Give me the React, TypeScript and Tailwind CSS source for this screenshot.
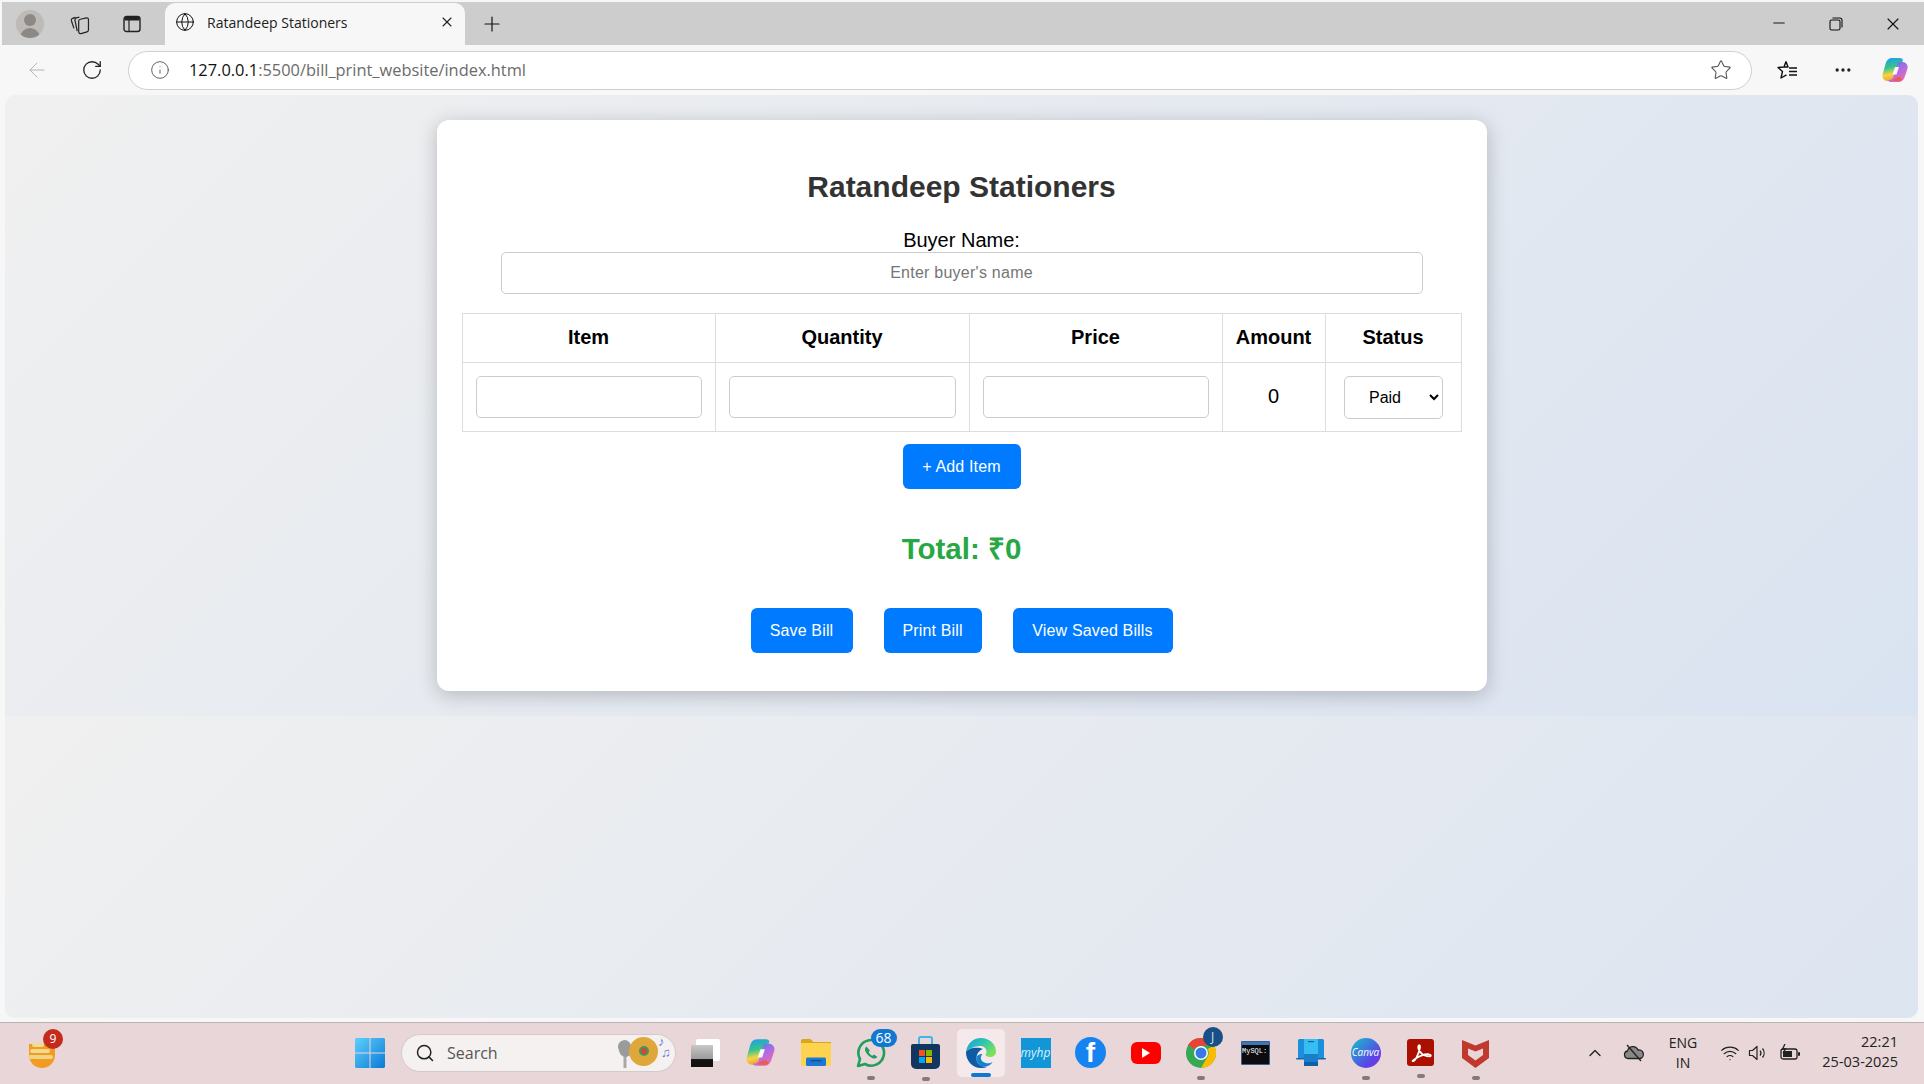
import { ArrowLeft, ChevronUp, Globe, Info, Minus, MoreHorizontal, Plus, RotateCw, Search, Star, Wifi, X } from "lucide-react";

const ARIAL = "font-['Liberation_Sans',Arial,sans-serif]";
const UI = "font-['Open_Sans','Noto_Sans',sans-serif]";

function Collections() {
  return (
    <svg width="22" height="22" viewBox="0 0 20 20" fill="none" stroke="#222" strokeWidth="1.1" strokeLinejoin="round">
      <path d="M4.500 14 2.200 7c-.3-1 .1-1.800 1-2.100L6 4" />
      <path d="M7.500 16.500 5.400 6.500c-.2-1 .3-1.800 1.200-2l2.800-.7" />
      <path d="M8.800 7.500c0-1 .6-1.600 1.500-1.800l5.500-1.200c1-.2 1.900.5 1.900 1.500v9.500c0 .9-.5 1.500-1.300 1.700l-5.500 1.500c-1.100.3-2.100-.5-2.100-1.600z" />
    </svg>
  );
}

function TabsIcon() {
  return (
    <svg width="18" height="18" viewBox="0 0 18 18" fill="none">
      <rect x="1" y="1.500" width="16" height="15" rx="2.500" stroke="#222" strokeWidth="1.400" />
      <path d="M1.500 4c0-1.500 1-2.200 2-2.200h11c1 0 2 .7 2 2.200v1.600h-15z" fill="#222" />
      <path d="M6 5v11" stroke="#222" strokeWidth="1.200" />
    </svg>
  );
}

function RestoreIcon() {
  return (
    <svg width="14" height="14" viewBox="0 0 14 14" fill="none" stroke="#111" strokeWidth="1.100">
      <rect x="1" y="3" width="10" height="10" rx="1.600" />
      <path d="M3.500 1h7.200C12 1 13 2 13 3.300v7.200" />
    </svg>
  );
}

function FavoritesIcon() {
  return (
    <svg width="24" height="24" viewBox="0 0 24 24" fill="none" stroke="#111" strokeWidth="1.400" strokeLinejoin="round">
      <path d="M10 3.500 12 9H8M10 3.500 8 9 2 9.500l4.500 4-1.500 6.500 5.500-3.200" />
      <path d="M13 10h8M13 13.500h8M13 17h8" />
    </svg>
  );
}

function CopilotLogo({ size = 28 }: { size?: number }) {
  return (
    <svg width={size} height={size} viewBox="0 0 28 28">
      <defs>
        <linearGradient id="cpA" x1="0.3" y1="0" x2="0.5" y2="1">
          <stop offset="0" stopColor="#1f9fe8" />
          <stop offset="0.4" stopColor="#35c48d" />
          <stop offset="0.7" stopColor="#f4d53f" />
          <stop offset="1" stopColor="#f29a3c" />
        </linearGradient>
        <linearGradient id="cpB" x1="0.2" y1="0" x2="0.8" y2="1">
          <stop offset="0" stopColor="#4a7df0" />
          <stop offset="0.5" stopColor="#b46be0" />
          <stop offset="1" stopColor="#ef6fa8" />
        </linearGradient>
      </defs>
      <path d="M11 2h8c1.500 0 2.500.7 3 2l-6 17c-.8 2.300-2.300 4-5 4H6.500C3 25 .8 22 1.600 18.500L4.500 8C5.500 4.500 7.500 2 11 2z" fill="url(#cpA)" />
      <path d="M17 6h4.500C25 6 27.300 9 26.500 12.500L24 20c-1.100 3.500-3 6-6.500 6H10c-1.500 0-2.500-.7-3-1.800l1.500-.2c2 0 3.200-1.300 3.900-3.200z" fill="url(#cpB)" />
      <path d="M14 11h4l-2.500 7.500h-4z" fill="#fff" opacity="0.95" />
      <path d="M11 25h7c2 0 3-.6 3.500-1.500L19 21l-4 .5z" fill="#f0574a" opacity="0.9" />
    </svg>
  );
}

function WindowsLogo() {
  return (
    <svg width="30" height="30" viewBox="0 0 30 30">
      <defs>
        <linearGradient id="winA" x1="0" y1="0" x2="1" y2="1">
          <stop offset="0" stopColor="#5fd0fb" />
          <stop offset="1" stopColor="#0a7ad6" />
        </linearGradient>
      </defs>
      <path d="M0 1.500C0 .7.700 0 1.500 0h13v14.500H0zM15.500 0h13c.8 0 1.500.7 1.500 1.500v13H15.500zM0 15.500h14.500V30h-13C.7 30 0 29.300 0 28.500zM15.500 15.500H30v13c0 .8-.7 1.500-1.500 1.500h-13z" fill="url(#winA)" />
    </svg>
  );
}

function EdgeLogo() {
  return (
    <svg width="32" height="32" viewBox="0 0 32 32">
      <defs>
        <linearGradient id="edA" x1="0" y1="0" x2="1" y2="0.6">
          <stop offset="0" stopColor="#1b9de2" />
          <stop offset="0.55" stopColor="#30c6ae" />
          <stop offset="1" stopColor="#7fe05a" />
        </linearGradient>
      </defs>
      <path d="M1 15C2 7 8 1 16 1c9 0 15 6.500 15 13.500 0 3.500-2.500 5.500-6 5.500-2.500 0-4.500-1-4.500-2.200 0-.8 1-1.100 1-3C21.500 11.500 19 9 15.500 9 9 9 4.500 12 1 15z" fill="url(#edA)" />
      <path d="M1 15c-.3 8.500 6.500 16 15 16 2.500 0 4.500-.5 6.500-1.500-5 1-11-1.500-11-8 0-5 3-8.500 6.500-9.500C13 9.500 4 10.500 1 15z" fill="#0f5aa5" />
      <path d="M11.500 21.500c0 7 7 10 12.500 7 1.500-.8 2.700-2 3.500-3.500-4 2.500-10.500 1-11.500-3-.5-2 .3-4 1.500-5-3.500 0-6 1.700-6 4.500z" fill="#1383cf" />
    </svg>
  );
}

function ChromeLogo() {
  return (
    <svg width="30" height="30" viewBox="0 0 30 30">
      <circle cx="15" cy="15" r="15" fill="#34a853" />
      <path d="M15 0a15 15 0 0 1 13 7.500H15a7.500 7.500 0 0 0-6.500 3.750L2 7A15 15 0 0 1 15 0z" fill="#ea4335" />
      <path d="M28 7.500A15 15 0 0 1 15 30l6.500-11.250A7.500 7.500 0 0 0 21.500 11z" fill="#fbbc04" />
      <circle cx="15" cy="15" r="7" fill="#fff" />
      <circle cx="15" cy="15" r="5.500" fill="#3b78e7" />
    </svg>
  );
}

function WhatsAppLogo() {
  return (
    <svg width="30" height="30" viewBox="0 0 30 30" fill="none">
      <path d="M2 28l2-7A12.800 12.800 0 1 1 9 26z" stroke="#1f9e5c" strokeWidth="2.600" strokeLinejoin="round" />
      <path d="M10.500 8.500c-1.500 1-2 2.800-1 5 1.500 3.200 4 5.500 7 6.700 2.200.8 4 .2 4.800-1.500l-3.300-2.200-1.500 1.300c-1.800-.8-3-2.200-3.800-3.900l1.200-1.400z" fill="#1f9e5c" />
    </svg>
  );
}

function StoreLogo() {
  return (
    <div className="relative h-[33px] w-[29px]">
      <div className="mx-auto h-[8px] w-[15px] rounded-t-[3px] border-2 border-b-0 border-[#3fb4ea]" />
      <div className="grid h-[25px] w-[29px] grid-cols-[6px_6px] content-center justify-center gap-px rounded-b-[5px] rounded-t-[2px] bg-[#12365f]">
        <span className="h-[6px] bg-[#f25022]" />
        <span className="h-[6px] bg-[#7fba00]" />
        <span className="h-[6px] bg-[#00a4ef]" />
        <span className="h-[6px] bg-[#ffb900]" />
      </div>
    </div>
  );
}

function FolderLogo() {
  return (
    <svg width="30" height="27" viewBox="0 0 30 27">
      <path d="M0 2c0-1 .7-2 2-2h7.500l3 3H30v6H0z" fill="#dca514" />
      <rect y="4" width="30" height="23" rx="1" fill="#fdd34f" />
      <rect x="5" y="18.500" width="20" height="8.500" rx="1.500" fill="#1a78d0" />
      <rect x="9.500" y="21" width="11" height="1.400" fill="#0c4f96" />
    </svg>
  );
}

function MonitorLogo() {
  return (
    <svg width="30" height="27" viewBox="0 0 30 27">
      <rect x="2" width="26" height="20" rx="1.500" fill="#1c8fdc" />
      <rect x="8" y="0" width="14" height="15" fill="#36bdf2" />
      <rect x="12" y="2" width="6" height="1.200" fill="#0f5ea8" />
      <rect y="19" width="30" height="1.500" rx="0.700" fill="#1567ab" />
      <rect x="8" y="15" width="14" height="8" fill="#1a7ccb" />
      <rect x="8" y="23" width="14" height="4" fill="#0f5ea8" />
    </svg>
  );
}

function AcrobatSwirl() {
  return (
    <svg width="24" height="24" viewBox="0 0 24 24" fill="none" stroke="#fff" strokeWidth="1.800" strokeLinejoin="round">
      <path d="M3.500 20c2.500 1.500 6.500-8 7.500-13.500.4-2.500-1.300-3-1.700-1C8.800 9 13 15.500 21 15.300c1.300 0 1-2-1-2-4-.3-11 1.500-16.500 6.700z" />
    </svg>
  );
}

function McAfeeLogo() {
  return (
    <svg width="27" height="30" viewBox="0 0 27 30">
      <path d="M0 2l13.500 5.500L27 2v18l-13.500 10L0 20z" fill="#c0392f" />
      <path d="M6 10.500l7.500 3 7.500-3V17l-7.500 5.500L6 17z" fill="#e9d5d8" />
    </svg>
  );
}

function WidgetLogo() {
  return (
    <div className="relative h-[30px] w-[30px]">
      <div className="absolute bottom-0 left-[2px] h-[24px] w-[26px] overflow-hidden rounded-b-full bg-[#f39a22]" />
      <span className="absolute left-[5px] top-[5px] h-[4px] w-[12px] rounded-full bg-[#f2dc92]" />
      <span className="absolute left-[3px] top-[11px] h-[4px] w-[20px] rounded-full bg-[#f0d98c]" />
      <span className="absolute left-[1px] top-[17px] h-[4px] w-[25px] rounded-full bg-[#efd488]" />
    </div>
  );
}

function SearchArt() {
  return (
    <div className="relative h-[34px] w-[56px]">
      <svg width="18" height="32" viewBox="0 0 18 32" className="absolute left-0 top-[2px]">
        <rect x="6.500" y="14" width="3" height="16" fill="#a8a8a8" />
        <rect x="1.500" y="2" width="13" height="17" rx="6.500" fill="#9b9b9b" transform="rotate(-18 8 10)" />
      </svg>
      <div className="absolute left-[12px] top-[1px] flex h-[29px] w-[29px] items-center justify-center rounded-full bg-[#dfa63a]">
        <span className="h-[10px] w-[10px] rounded-full border-2 border-[#3f9a5a] bg-[#d8453a]" />
      </div>
      <span className="absolute left-[41px] top-[-3px] text-[13px] leading-[16px] text-[#6f78d8]">♪</span>
      <span className="absolute left-[44px] top-[8px] text-[13px] leading-[16px] text-[#6f78d8]">♫</span>
    </div>
  );
}

function Dot() {
  return <span className="absolute bottom-[-12px] left-1/2 h-[4px] w-[8px] -translate-x-1/2 rounded-full bg-[#827a7c]" />;
}

function TaskIcon({ children, dot }: { children: React.ReactNode; dot?: boolean }) {
  return (
    <div className="flex h-full w-[55px] shrink-0 items-center justify-center">
      <div className="relative flex items-center justify-center">
        {children}
        {dot && <Dot />}
      </div>
    </div>
  );
}

function TabStrip() {
  return (
    <div className={`${UI} ml-[2px] mt-[2px] flex h-[43px] shrink-0 items-center bg-[#cdcdcd]`}>
      <div className="flex w-[56px] justify-center">
        <div className="relative h-[28px] w-[28px] overflow-hidden rounded-full bg-[#bdbab7]">
          <span className="absolute left-[8px] top-[4px] h-[12px] w-[12px] rounded-full bg-[#8c8985]" />
          <span className="absolute left-[4px] top-[18px] h-[14px] w-[20px] rounded-t-full bg-[#8c8985]" />
        </div>
      </div>
      <div className="flex w-[44px] justify-center">
        <Collections />
      </div>
      <div className="flex w-[59px] justify-center">
        <TabsIcon />
      </div>
      <div className="ml-[4px] flex h-[42px] w-[300px] items-center self-end rounded-t-[10px] bg-[#f7f7f7] pb-[4px] pl-[10px] pr-[10px]">
        <Globe size={20} strokeWidth={1.2} className="text-[#111]" />
        <span className="ml-[12px] flex-1 text-[14px] text-[#222]">Ratandeep Stationers</span>
        <X size={16} strokeWidth={1.6} className="text-[#222]" />
      </div>
      <div className="flex w-[54px] justify-center">
        <Plus size={24} strokeWidth={1.2} className="text-[#111]" />
      </div>
      <div className="ml-auto mr-[3px] flex">
        <div className="flex w-[57px] justify-center">
          <Minus size={18} strokeWidth={1.3} className="text-[#111]" />
        </div>
        <div className="flex w-[57px] items-center justify-center">
          <RestoreIcon />
        </div>
        <div className="flex w-[57px] justify-center">
          <X size={20} strokeWidth={1.3} className="text-[#111]" />
        </div>
      </div>
    </div>
  );
}

function Toolbar() {
  return (
    <div className={`${UI} flex h-[50px] shrink-0 items-center bg-[#f7f7f7]`}>
      <div className="flex w-[74px] justify-center">
        <ArrowLeft size={24} strokeWidth={1} className="text-[#b5b5b5]" />
      </div>
      <div className="flex w-[36px] justify-center">
        <RotateCw size={22} strokeWidth={1.4} className="text-[#222]" />
      </div>
      <div className="ml-[18px] flex h-[39px] w-[1624px] items-center rounded-full border border-[#cfcfcf] bg-white pl-[21px] pr-[19px]">
        <Info size={20} strokeWidth={1} className="text-[#444]" />
        <span className="ml-[19px] flex-1 text-[16.4px] text-[#6b6b6b]">
          <span className="text-[#111]">127.0.0.1</span>:5500/bill_print_website/index.html
        </span>
        <Star size={22} strokeWidth={1.2} className="text-[#555]" />
      </div>
      <div className="ml-[8px] flex w-[55px] justify-center">
        <FavoritesIcon />
      </div>
      <div className="flex w-[55px] justify-center">
        <MoreHorizontal size={20} strokeWidth={2} className="text-[#222]" />
      </div>
      <div className="flex w-[50px] justify-center">
        <CopilotLogo />
      </div>
    </div>
  );
}

function BlueButton({ label, className }: { label: string; className: string }) {
  return (
    <button className={`h-[45px] rounded-[6px] bg-[#007bff] text-[16px] tracking-[0.15px] text-white ${className}`}>{label}</button>
  );
}

function BillCard() {
  const input = "block h-[42px] rounded-[5px] border border-[#ccc] bg-white text-[16px]";
  const th = "h-[49px] border border-[#ddd] pb-[2px] text-[20px] font-bold text-black";
  const td = "h-[69px] border border-[#ddd] px-[13px] text-center";

  return (
    <div className={`${ARIAL} mx-auto w-[1050px] rounded-[12px] bg-white px-[25px] pb-[38px] pt-[48px] shadow-[0_4px_20px_rgba(0,0,0,0.22)]`}>
      <h1 className="text-center text-[30px] font-bold leading-[37px] text-[#333]">Ratandeep Stationers</h1>
      <label className="mt-[23px] block text-center text-[20px] leading-[24px] text-black">Buyer Name:</label>
      <input
        placeholder="Enter buyer's name"
        className={`${input} mx-auto w-[922px] text-center tracking-[0.25px] placeholder:text-[#757575]`}
      />
      <table className="mt-[19px] w-[999px] table-fixed border-collapse">
        <thead>
          <tr>
            <th className={`${th} w-[253px]`}>Item</th>
            <th className={`${th} w-[254px]`}>Quantity</th>
            <th className={`${th} w-[253px]`}>Price</th>
            <th className={`${th} w-[103px]`}>Amount</th>
            <th className={`${th} w-[136px]`}>Status</th>
          </tr>
        </thead>
        <tbody>
          <tr>
            <td className={td}>
              <input className={`${input} w-full`} />
            </td>
            <td className={td}>
              <input className={`${input} w-full`} />
            </td>
            <td className={td}>
              <input className={`${input} w-full`} />
            </td>
            <td className="h-[69px] border border-[#ddd] pb-[2px] text-center text-[20px] text-black">0</td>
            <td className="h-[69px] border border-[#ddd] text-center">
              <select className="mx-auto block h-[43px] w-[99px] rounded-[5px] border border-[#ccc] bg-white pr-[4px] text-center text-[16px] text-black">
                <option>Paid</option>
                <option>Unpaid</option>
              </select>
            </td>
          </tr>
        </tbody>
      </table>
      <div className="mt-[12px] flex justify-center">
        <BlueButton label="+ Add Item" className="w-[118px]" />
      </div>
      <p className="mt-[43px] text-center text-[29.5px] font-bold leading-[34px] text-[#28a745]">Total: ₹0</p>
      <div className="mt-[42px] flex justify-center gap-[31px]">
        <BlueButton label="Save Bill" className="w-[102px]" />
        <BlueButton label="Print Bill" className="w-[98px]" />
        <BlueButton label="View Saved Bills" className="w-[160px]" />
      </div>
    </div>
  );
}

function Taskbar() {
  return (
    <div className={`${UI} mt-[4px] flex h-[62px] shrink-0 items-center border-t border-[#b9b2b3] bg-[#e9d6d9] pb-[2px] text-[#222]`}>
      <div className="flex w-[84px] justify-center">
        <div className="relative">
          <WidgetLogo />
          <span className="absolute right-[-6px] top-[-9px] flex h-[20px] w-[20px] items-center justify-center rounded-full bg-[#c42b1c] text-[12px] text-white">
            9
          </span>
        </div>
      </div>
      <div className="ml-[258px] flex w-[56px] justify-center">
        <WindowsLogo />
      </div>
      <div className="ml-[3px] mr-[2px] flex h-[38px] w-[275px] items-center rounded-full border border-[#d5c9cb] bg-[#f5f1f1] pl-[13px] pr-[2px]">
        <Search size={20} strokeWidth={1.8} className="text-[#222]" />
        <span className="ml-[12px] flex-1 text-[16px] text-[#555]">Search</span>
        <SearchArt />
      </div>
      <TaskIcon>
        <div className="relative h-[28px] w-[29px]">
          <div className="absolute right-0 top-0 h-[22px] w-[24px] rounded-[2px] bg-white" />
          <div className="absolute bottom-0 left-0 h-[22px] w-[22px] bg-[linear-gradient(#c8c8c8_0%,#9a9a9a_65%,#111_66%)]" />
        </div>
      </TaskIcon>
      <TaskIcon>
        <CopilotLogo size={31} />
      </TaskIcon>
      <TaskIcon>
        <FolderLogo />
      </TaskIcon>
      <TaskIcon dot>
        <WhatsAppLogo />
        <span className="absolute right-[-11px] top-[-9px] flex h-[18px] w-[26px] items-center justify-center rounded-full bg-[#0f78d4] text-[14px] text-white">
          68
        </span>
      </TaskIcon>
      <TaskIcon dot>
        <StoreLogo />
      </TaskIcon>
      <div className="flex h-full w-[55px] shrink-0 items-center justify-center">
        <div className="relative flex h-[48px] w-[48px] items-center justify-center rounded-[5px] bg-[#f6e9ec]">
          <EdgeLogo />
          <span className="absolute bottom-0 left-1/2 h-[4px] w-[20px] -translate-x-1/2 rounded-full bg-[#0f78d4]" />
        </div>
      </div>
      <TaskIcon>
        <div className="flex h-[30px] w-[30px] items-center justify-center bg-[#1296d8] text-[12px] italic text-[#d9f1fb]">myhp</div>
      </TaskIcon>
      <TaskIcon>
        <div className="flex h-[31px] w-[31px] items-end justify-center overflow-hidden rounded-full bg-[#1684f0] font-['Liberation_Sans',sans-serif] text-[28px] font-bold leading-[30px] text-white">
          f
        </div>
      </TaskIcon>
      <TaskIcon>
        <div className="flex h-[22px] w-[30px] items-center justify-center rounded-[6px] bg-[#f00]">
          <span className="h-0 w-0 border-y-[5px] border-l-[8px] border-y-transparent border-l-white" />
        </div>
      </TaskIcon>
      <TaskIcon dot>
        <ChromeLogo />
        <span className="absolute right-[-7px] top-[-11px] flex h-[20px] w-[20px] items-center justify-center rounded-full bg-[#174f86] text-[12px] text-[#cfe0f0]">
          J
        </span>
      </TaskIcon>
      <TaskIcon>
        <div className="h-[24px] w-[29px] overflow-hidden rounded-[1px] border border-[#3b5f8a] bg-[#0b0b10]">
          <div className="h-[3px] bg-[#3b78b8]" />
          <div className="font-['Liberation_Mono',monospace] text-[7px] leading-[12px] text-white">MySQL:</div>
        </div>
      </TaskIcon>
      <TaskIcon>
        <MonitorLogo />
      </TaskIcon>
      <TaskIcon dot>
        <div className="flex h-[30px] w-[30px] items-center justify-center rounded-full bg-[linear-gradient(135deg,#12c4c8,#5a45e8_70%,#7c35d8)] text-[10px] italic text-white">
          Canva
        </div>
      </TaskIcon>
      <TaskIcon dot>
        <div className="flex h-[27px] w-[27px] items-center justify-center rounded-[3px] bg-[#ab0f00]">
          <AcrobatSwirl />
        </div>
      </TaskIcon>
      <TaskIcon dot>
        <McAfeeLogo />
      </TaskIcon>
      <div className="ml-[72px] flex w-[40px] justify-center">
        <ChevronUp size={20} strokeWidth={1.6} />
      </div>
      <div className="flex w-[38px] justify-center">
        <svg width="22" height="18" viewBox="0 0 22 18" fill="#888" stroke="#222" strokeWidth="1.300">
          <path d="M5 14.500a3.800 3.800 0 0 1-.5-7.500A5.500 5.500 0 0 1 15 6a4.300 4.300 0 0 1 2 8.500z" />
          <path d="M4 1l14 16" fill="none" />
        </svg>
      </div>
      <div className="flex w-[60px] flex-col items-center text-[14px] leading-[20px]">
        <span>ENG</span>
        <span>IN</span>
      </div>
      <div className="ml-[2px] flex w-[30px] justify-center">
        <Wifi size={20} strokeWidth={1.4} />
      </div>
      <div className="flex w-[26px] justify-center">
        <svg width="20" height="18" viewBox="0 0 20 18" fill="none" stroke="#222" strokeWidth="1.200" strokeLinejoin="round">
          <path d="M1.500 6.500h3L9 2.500v13l-4.500-4h-3z" />
          <path d="M12 6.500a4 4 0 0 1 0 5M14.500 4.500a7 7 0 0 1 0 9" />
        </svg>
      </div>
      <div className="flex w-[38px] justify-center">
        <svg width="21" height="18" viewBox="0 0 21 18" fill="none">
          <rect x="1" y="5" width="16" height="10" rx="2" stroke="#222" strokeWidth="1.300" />
          <rect x="3" y="7" width="9" height="6" fill="#222" />
          <rect x="18" y="8" width="2" height="4" rx="1" fill="#222" />
          <path d="M5 0 2.500 5h3L3 9" stroke="#222" strokeWidth="1.300" />
        </svg>
      </div>
      <div className="flex-1 pb-[2px] pr-[26px] text-right text-[14.5px] leading-[20px]">
        <div>22:21</div>
        <div>25-03-2025</div>
      </div>
    </div>
  );
}

export default function App() {
  return (
    <div className="flex h-screen w-full flex-col overflow-hidden bg-[#f7f7f7]">
      <TabStrip />
      <Toolbar />
      <main className="ml-[5px] mr-[6px] min-h-0 flex-1 rounded-[10px] bg-[linear-gradient(135deg,#f0f0f0,#dae3f1)] bg-[length:100%_621px] pt-[25px]">
        <BillCard />
      </main>
      <Taskbar />
    </div>
  );
}
